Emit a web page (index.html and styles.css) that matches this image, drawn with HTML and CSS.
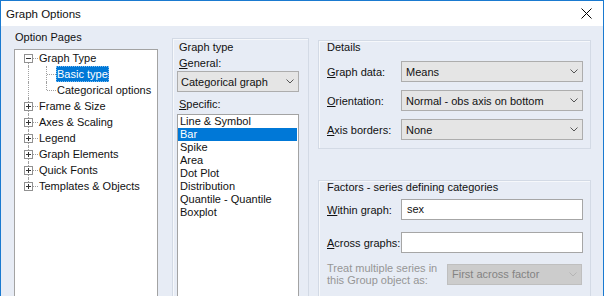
FILE: index.html
```html
<!DOCTYPE html>
<html lang="en">
<head>
    <meta charset="UTF-8">
    <title>Graph Options</title>
    <link rel="stylesheet" href="styles.css">
</head>
<body>

    <div class="window">
        <div class="titlebar">
            <span class="title">Graph Options</span>
            <svg class="close" width="11" height="11" viewBox="0 0 11 11">
                <path d="M0.5 0.5L10.5 10.5M10.5 0.5L0.5 10.5" stroke="#000" stroke-width="1" fill="none"/>
            </svg>
        </div>

        <div class="main">
            <!-- Option pages tree -->
            <div class="pages">
                <div class="pages-label">Option Pages</div>
                <div class="tree">
                    <div class="node first">
                        <svg class="exp" width="9" height="9"><rect x="0.5" y="0.5" width="8" height="8" fill="#fff" stroke="#919191"/><path d="M2 4.5h5" stroke="#333"/></svg>
                        <span class="hconn"></span><span class="node-text">Graph Type</span>
                    </div>
                    <div class="node child">
                        <span class="hconn"></span><span class="node-text selected">Basic type</span>
                    </div>
                    <div class="node child last-child">
                        <span class="hconn"></span><span class="node-text">Categorical options</span>
                    </div>
                    <div class="node">
                        <svg class="exp" width="9" height="9"><rect x="0.5" y="0.5" width="8" height="8" fill="#fff" stroke="#919191"/><path d="M2 4.5h5M4.5 2v5" stroke="#333"/></svg>
                        <span class="hconn"></span><span class="node-text">Frame &amp; Size</span>
                    </div>
                    <div class="node">
                        <svg class="exp" width="9" height="9"><rect x="0.5" y="0.5" width="8" height="8" fill="#fff" stroke="#919191"/><path d="M2 4.5h5M4.5 2v5" stroke="#333"/></svg>
                        <span class="hconn"></span><span class="node-text">Axes &amp; Scaling</span>
                    </div>
                    <div class="node">
                        <svg class="exp" width="9" height="9"><rect x="0.5" y="0.5" width="8" height="8" fill="#fff" stroke="#919191"/><path d="M2 4.5h5M4.5 2v5" stroke="#333"/></svg>
                        <span class="hconn"></span><span class="node-text">Legend</span>
                    </div>
                    <div class="node">
                        <svg class="exp" width="9" height="9"><rect x="0.5" y="0.5" width="8" height="8" fill="#fff" stroke="#919191"/><path d="M2 4.5h5M4.5 2v5" stroke="#333"/></svg>
                        <span class="hconn"></span><span class="node-text">Graph Elements</span>
                    </div>
                    <div class="node">
                        <svg class="exp" width="9" height="9"><rect x="0.5" y="0.5" width="8" height="8" fill="#fff" stroke="#919191"/><path d="M2 4.5h5M4.5 2v5" stroke="#333"/></svg>
                        <span class="hconn"></span><span class="node-text">Quick Fonts</span>
                    </div>
                    <div class="node last">
                        <svg class="exp" width="9" height="9"><rect x="0.5" y="0.5" width="8" height="8" fill="#fff" stroke="#919191"/><path d="M2 4.5h5M4.5 2v5" stroke="#333"/></svg>
                        <span class="hconn"></span><span class="node-text">Templates &amp; Objects</span>
                    </div>
                </div>
            </div>

            <!-- Graph type -->
            <div class="type-col">
                <div class="frame type-frame">
                    <div class="frame-title">Graph type</div>
                    <div class="field-label"><u>G</u>eneral:</div>
                    <div class="combo">
                        <span>Categorical graph</span>
                        <svg width="8" height="5"><path d="M0.5 0.5L4 4L7.5 0.5" stroke="#555" fill="none"/></svg>
                    </div>
                    <div class="field-label spaced"><u>S</u>pecific:</div>
                    <ul class="listbox">
                        <li>Line &amp; Symbol</li>
                        <li class="selected">Bar</li>
                        <li>Spike</li>
                        <li>Area</li>
                        <li>Dot Plot</li>
                        <li>Distribution</li>
                        <li>Quantile - Quantile</li>
                        <li>Boxplot</li>
                    </ul>
                </div>
            </div>

            <!-- Details and factors -->
            <div class="detail-col">
                <div class="frame details">
                    <div class="frame-title">Details</div>
                    <div class="row first-row">
                        <span class="row-label"><u>G</u>raph data:</span>
                        <div class="combo wide">
                            <span>Means</span>
                            <svg width="8" height="5"><path d="M0.5 0.5L4 4L7.5 0.5" stroke="#555" fill="none"/></svg>
                        </div>
                    </div>
                    <div class="row">
                        <span class="row-label"><u>O</u>rientation:</span>
                        <div class="combo wide">
                            <span>Normal - obs axis on bottom</span>
                            <svg width="8" height="5"><path d="M0.5 0.5L4 4L7.5 0.5" stroke="#555" fill="none"/></svg>
                        </div>
                    </div>
                    <div class="row">
                        <span class="row-label"><u>A</u>xis borders:</span>
                        <div class="combo wide">
                            <span>None</span>
                            <svg width="8" height="5"><path d="M0.5 0.5L4 4L7.5 0.5" stroke="#555" fill="none"/></svg>
                        </div>
                    </div>
                </div>

                <div class="frame factors">
                    <div class="frame-title">Factors - series defining categories</div>
                    <div class="row within-row">
                        <span class="row-label"><u>W</u>ithin graph:</span>
                        <div class="textbox">sex</div>
                    </div>
                    <div class="row across-row">
                        <span class="row-label"><u>A</u>cross graphs:</span>
                        <div class="textbox"></div>
                    </div>
                    <div class="row treat-row">
                        <span class="row-label disabled">Treat multiple series in<br>this Group object as:</span>
                        <div class="combo disabled-combo">
                            <span>First across factor</span>
                            <svg width="8" height="5"><path d="M0.5 0.5L4 4L7.5 0.5" stroke="#b5b5b5" fill="none"/></svg>
                        </div>
                    </div>
                </div>
            </div>
        </div>
    </div>

</body>
</html>
```

FILE: styles.css
```css
* {
    box-sizing: border-box;
}
body {
    margin: 0;
    font-family: "Liberation Sans", Arial, sans-serif;
    font-size: 11px;
    color: #111;
    background: #e7ecf5;
}
.window {
    width: 604px;
    height: 296px;
    border: 1px solid #1a7ad0;
    border-bottom: none;
    background: #e7ecf5;
    overflow: hidden;
    display: flex;
    flex-direction: column;
}
.titlebar {
    flex: none;
    height: 25px;
    background: #fff;
    display: flex;
    align-items: center;
    justify-content: space-between;
    padding: 0 11px 0 5px;
}
.title {
    font-size: 11.5px;
}
.main {
    flex: 1;
    display: flex;
    min-height: 0;
}

/* tree */
.pages {
    width: 163px;
    flex: none;
}
.pages-label {
    margin: 4px 0 0 14px;
    line-height: 14px;
}
.tree {
    margin: 5px 0 0 13px;
    width: 144px;
    height: 260px;
    background: #fff;
    border: 1px solid #a3a3a3;
}
.node {
    position: relative;
    height: 16px;
    display: flex;
    align-items: center;
    padding-left: 9px;
}
.node::before {
    content: "";
    position: absolute;
    left: 13px;
    top: 0;
    bottom: 0;
    border-left: 1px dotted #a0a0a0;
}
.node.first::before {
    top: 8px;
}
.node.last::before {
    bottom: 8px;
}
.node.child {
    padding-left: 32px;
}
.node.child::after {
    content: "";
    position: absolute;
    left: 31px;
    top: 0;
    bottom: 0;
    border-left: 1px dotted #a0a0a0;
}
.node.last-child::after {
    bottom: 8px;
}
.exp {
    position: relative;
    z-index: 1;
    flex: none;
}
.hconn {
    width: 5px;
    border-top: 1px dotted #a0a0a0;
}
.node.child .hconn {
    width: 9px;
}
.node-text {
    padding: 0 1px;
    line-height: 16px;
    white-space: nowrap;
}
.node-text.selected {
    background: #0078d7;
    color: #fff;
    outline: 1px dotted #7fbdf0;
    outline-offset: -1px;
}

/* frames */
.frame {
    border: 1px solid #d3dae5;
    box-shadow: inset 1px 1px 0 #f6f8fb;
}
.frame-title {
    line-height: 13px;
}

/* graph type column */
.type-col {
    width: 146px;
    flex: none;
    padding: 12px 0 0 8px;
}
.type-frame {
    width: 137px;
    height: 270px;
    padding: 1px 0 0 4px;
}
.type-frame .frame-title {
    line-height: 14px;
    padding-left: 2px;
}
.field-label {
    line-height: 14px;
    padding-left: 2px;
    margin-top: 2px;
}
.field-label.spaced {
    margin-top: 5px;
}
.combo {
    height: 21px;
    width: 122px;
    margin-top: 1px;
    background: #e5e5e5;
    border: 1px solid #adadad;
    display: flex;
    align-items: center;
    justify-content: space-between;
    padding: 0 4px 0 3px;
    white-space: nowrap;
}
.listbox {
    list-style: none;
    margin: 3px 0 0 0;
    padding: 0;
    width: 122px;
    height: 200px;
    background: #fff;
    border: 1px solid #a3a3a3;
}
.listbox li {
    height: 13px;
    line-height: 13px;
    padding-left: 2px;
}
.listbox li.selected {
    background: #0078d7;
    color: #fff;
    margin-right: 1px;
}

/* details column */
.detail-col {
    flex: 1;
    padding: 14px 0 0 8px;
}
.details {
    width: 273px;
    height: 109px;
    padding-left: 8px;
}
.row {
    display: flex;
    align-items: center;
    margin-top: 8px;
}
.row.first-row {
    margin-top: 7px;
}
.row-label {
    width: 74px;
    flex: none;
    white-space: nowrap;
}
.combo.wide {
    width: 182px;
    margin-top: 0;
    padding-left: 4px;
}
.factors {
    width: 273px;
    height: 140px;
    margin-top: 31px;
    padding-left: 8px;
}
.textbox {
    width: 182px;
    height: 21px;
    background: #fff;
    border: 1px solid #a6a6a6;
    padding-left: 5px;
    line-height: 19px;
}
.row.within-row {
    margin-top: 5px;
}
.row.across-row {
    margin-top: 12px;
}
.row.treat-row {
    margin-top: 9px;
}
.treat-row .row-label {
    width: 120px;
    line-height: 12px;
}
.disabled {
    color: #969696;
}
.combo.disabled-combo {
    width: 135px;
    margin-top: 0;
    background: #cccccc;
    border-color: #bfbfbf;
    color: #838383;
    padding-left: 4px;
}
```
